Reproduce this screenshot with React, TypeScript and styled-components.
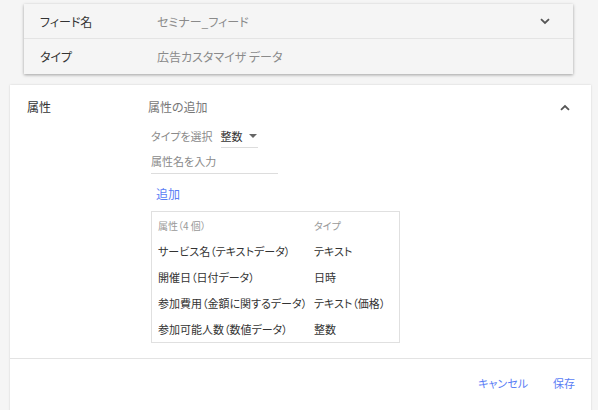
import styled, { createGlobalStyle } from 'styled-components';

const GlobalStyle = createGlobalStyle`
  html, body {
    margin: 0;
    padding: 0;
    background: #f5f5f5;
  }
  body {
    width: 598px;
    height: 410px;
    overflow: hidden;
    font-family: "Noto Sans CJK JP", "Noto Sans", sans-serif;
    font-feature-settings: "palt";
    font-size: 12px;
    color: #333;
  }
`;

const attributes = [
  { name: 'サービス名（テキストデータ）', type: 'テキスト' },
  { name: '開催日（日付データ）', type: '日時' },
  { name: '参加費用（金額に関するデータ）', type: 'テキスト（価格）' },
  { name: '参加可能人数（数値データ）', type: '整数' },
];

const ChevronDown = () => (
  <svg width="10" height="7" viewBox="0 0 10 7">
    <path d="M1 1.2 L5 5 L9 1.2" fill="none" stroke="#555" strokeWidth="1.8" />
  </svg>
);

const ChevronUp = () => (
  <svg width="10" height="7" viewBox="0 0 10 7">
    <path d="M1 5.8 L5 2 L9 5.8" fill="none" stroke="#555" strokeWidth="1.8" />
  </svg>
);

const App = () => {
  return (
    <>
      <GlobalStyle />
      <Page>
        <SummaryCard>
          <SummaryRow $height={34}>
            <Label>フィード名</Label>
            <Value>セミナー_フィード</Value>
            <IconSlot>
              <ChevronDown />
            </IconSlot>
          </SummaryRow>
          <SummaryRow $height={36} $divider>
            <Label>タイプ</Label>
            <Value>広告カスタマイザ データ</Value>
          </SummaryRow>
        </SummaryCard>

        <EditCard>
          <EditBody>
            <SectionLabel>属性</SectionLabel>
            <Content>
              <SubTitle>属性の追加</SubTitle>
              <TypeRow>
                <Hint>タイプを選択</Hint>
                <Select>
                  整数
                  <Caret />
                </Select>
              </TypeRow>
              <NameInput>属性名を入力</NameInput>
              <TextButton $inline>追加</TextButton>
              <Table>
                <TableRow $head>
                  <span>属性（4 個）</span>
                  <span>タイプ</span>
                </TableRow>
                {attributes.map((a) => (
                  <TableRow key={a.name}>
                    <span>{a.name}</span>
                    <span>{a.type}</span>
                  </TableRow>
                ))}
              </Table>
            </Content>
            <IconSlot $top>
              <ChevronUp />
            </IconSlot>
          </EditBody>
          <Footer>
            <TextButton>キャンセル</TextButton>
            <TextButton>保存</TextButton>
          </Footer>
        </EditCard>
      </Page>
    </>
  );
};

export default App;

const Page = styled.div`
  display: flex;
  flex-direction: column;
  padding-top: 4px;
`;

const SummaryCard = styled.div`
  margin: 0 25px 0 24px;
  background: #f5f5f5;
  box-shadow: 0 1px 3px rgba(0, 0, 0, 0.35);
`;

const SummaryRow = styled.div<{ $height: number; $divider?: boolean }>`
  display: grid;
  grid-template-columns: 117px 1fr auto;
  align-items: center;
  height: ${(p) => p.$height}px;
  padding: 0 22px 0 16px;
  border-top: ${(p) => (p.$divider ? '1px solid #e4e4e4' : 'none')};
  box-sizing: border-box;
`;

const Label = styled.span`
  color: #333;
`;

const Value = styled.span`
  color: #8a8a8a;
`;

const IconSlot = styled.span<{ $top?: boolean }>`
  display: flex;
  align-items: center;
  justify-content: center;
  width: 12px;
  height: ${(p) => (p.$top ? '16px' : 'auto')};
`;

const EditCard = styled.div`
  margin: 11px 7px 0 10px;
  background: #fff;
  box-shadow: 0 0 2px rgba(0, 0, 0, 0.15);
  height: 330px;
  display: flex;
  flex-direction: column;
`;

const EditBody = styled.div`
  display: grid;
  grid-template-columns: 121px 1fr auto;
  align-items: start;
  padding: 14px 20px 15px 17px;
  border-bottom: 1px solid #e3e3e3;
`;

const SectionLabel = styled.span`
  line-height: 16px;
`;

const Content = styled.div`
  display: flex;
  flex-direction: column;
  align-items: flex-start;
  white-space: nowrap;
`;

const SubTitle = styled.span`
  color: #777;
  line-height: 16px;
`;

const TypeRow = styled.div`
  display: flex;
  align-items: flex-end;
  gap: 8px;
  margin: 13px 0 0 3px;
`;

const Hint = styled.span`
  color: #8a8a8a;
  font-size: 11px;
  line-height: 16px;
  padding-bottom: 4px;
`;

const Select = styled.span`
  display: flex;
  align-items: center;
  gap: 6px;
  width: 37px;
  height: 20px;
  padding-bottom: 4px;
  box-sizing: border-box;
  color: #333;
  font-size: 11px;
  border-bottom: 1px solid #ddd;
`;

const Caret = styled.span`
  width: 0;
  height: 0;
  border-left: 4px solid transparent;
  border-right: 4px solid transparent;
  border-top: 4px solid #666;
`;

const NameInput = styled.span`
  width: 127px;
  margin: 2px 0 0 3px;
  padding: 3px 0 4px;
  line-height: 16px;
  color: #8a8a8a;
  font-size: 11px;
  border-bottom: 1px solid #ddd;
`;

const TextButton = styled.span<{ $inline?: boolean }>`
  color: #5a7df5;
  font-size: ${(p) => (p.$inline ? '12px' : '11px')};
  line-height: 16px;
  margin: ${(p) => (p.$inline ? '12px 0 0 8px' : '0')};
`;

const Table = styled.div`
  width: 249px;
  margin: 9px 0 0 3px;
  border: 1px solid #e0e0e0;
  box-sizing: border-box;
`;

const TableRow = styled.div<{ $head?: boolean }>`
  display: grid;
  grid-template-columns: 156px 1fr;
  align-items: center;
  height: 26px;
  padding-left: 6px;
  font-size: ${(p) => (p.$head ? '10px' : '11px')};
  color: ${(p) => (p.$head ? '#999' : '#333')};
`;

const Footer = styled.div`
  display: flex;
  justify-content: flex-end;
  align-items: center;
  gap: 25px;
  padding: 16px 16px 0 0;
`;
